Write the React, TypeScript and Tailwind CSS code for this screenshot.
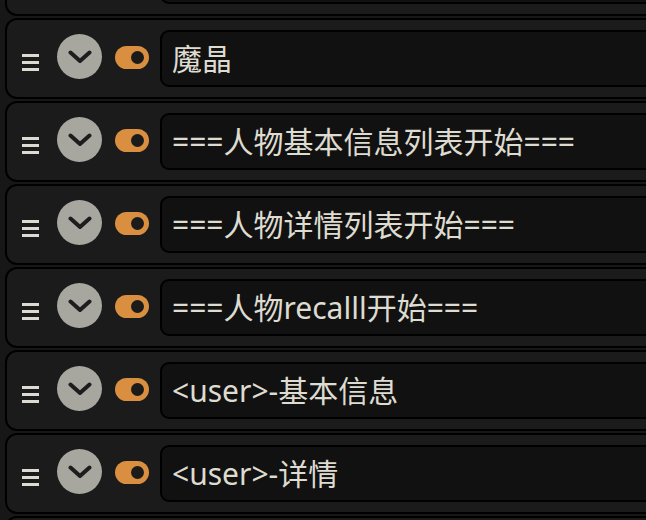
import { useState } from 'react';

type Entry = { id: number; name: string; enabled: boolean };

const initial: Entry[] = [
  { id: 0, name: '角色设定', enabled: true },
  { id: 1, name: '魔晶', enabled: true },
  { id: 2, name: '===人物基本信息列表开始===', enabled: true },
  { id: 3, name: '===人物详情列表开始===', enabled: true },
  { id: 4, name: '===人物recalll开始===', enabled: true },
  { id: 5, name: '<user>-基本信息', enabled: true },
  { id: 6, name: '<user>-详情', enabled: true },
  { id: 7, name: '<user>-关系', enabled: true },
];

const DragHandle = () => (
  <div className="flex w-[17px] shrink-0 flex-col gap-[4px] mt-[8px]">
    <span className="h-[3px] w-full bg-[#dddbd1]" />
    <span className="h-[3px] w-full bg-[#dddbd1]" />
    <span className="h-[3px] w-full bg-[#dddbd1]" />
  </div>
);

const ExpandButton = () => (
  <button className="ml-[18px] mb-[4px] flex h-[45px] w-[45px] shrink-0 items-center justify-center rounded-full bg-[#a7a7a0]">
    <svg width="24" height="14" viewBox="0 0 24 14" fill="none">
      <path d="M2.5 2.5 L12 11 L21.5 2.5" stroke="#1d1d1d" strokeWidth="4" strokeLinecap="round" strokeLinejoin="round" />
    </svg>
  </button>
);

const Toggle = ({ on, onClick }: { on: boolean; onClick: () => void }) => (
  <button
    onClick={onClick}
    className={`ml-[13px] mb-[2px] flex h-[23px] w-[34px] shrink-0 items-center rounded-full px-[5px] ${
      on ? 'justify-end bg-[#d98f3f]' : 'justify-start bg-[#6b6b66]'
    }`}
  >
    <span className="h-[13px] w-[13px] rounded-full bg-[#1b1b1b]" />
  </button>
);

export default function App() {
  const [entries, setEntries] = useState(initial);

  const toggle = (id: number) =>
    setEntries((list) => list.map((e) => (e.id === id ? { ...e, enabled: !e.enabled } : e)));

  return (
    <div className="h-[520px] w-[646px] overflow-hidden bg-[#171717] font-['Noto_Sans','Noto_Sans_CJK_SC',sans-serif]">
      <div className="-mt-[65px] flex w-[760px] flex-col gap-[2px]">
        {entries.map((entry) => (
          <div
            key={entry.id}
            className="ml-[5px] flex items-center rounded-[12px] border-2 border-black bg-[#1b1b1b] py-[10px] pl-[15px] pr-[10px]"
          >
            <DragHandle />
            <ExpandButton />
            <Toggle on={entry.enabled} onClick={() => toggle(entry.id)} />
            <div className="ml-[11px] flex h-[57px] flex-1 items-center rounded-[9px] border-2 border-black bg-[#111111] pl-[10px]">
              <span className="whitespace-nowrap text-[30px] leading-none text-[#dedbd0]">{entry.name}</span>
            </div>
          </div>
        ))}
      </div>
    </div>
  );
}
